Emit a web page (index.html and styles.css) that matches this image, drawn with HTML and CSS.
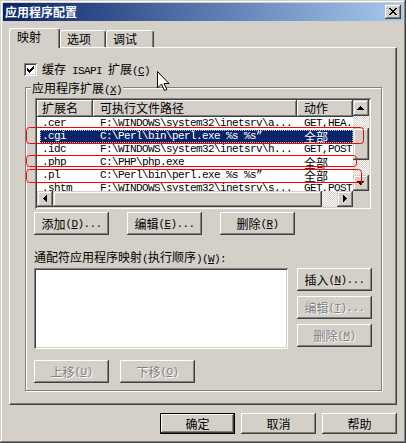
FILE: index.html
```html
<!DOCTYPE html>
<html>
<head>
<meta charset="utf-8">
<title>应用程序配置</title>
<link rel="stylesheet" href="styles.css">
</head>
<body>
<div class="win">
  <div class="titlebar">
    <span class="title">应用程序配置</span>
    <span class="close"><svg width="16" height="14" shape-rendering="crispEdges"><path d="M4 3h2v1H4zM10 3h2v1h-2zM5 4h2v1H5zM9 4h2v1H9zM6 5h4v1H6zM7 6h2v1H7zM6 7h4v1H6zM5 8h2v1H5zM9 8h2v1H9zM4 9h2v1H4zM10 9h2v1h-2z" fill="#000"/></svg></span>
  </div>

  <div class="tabs">
    <div class="tab sel t1">映射</div>
    <div class="tab t2">选项</div>
    <div class="tab t3">调试</div>
  </div>

  <div class="panel">
    <div class="chk-row">
      <span class="chk"><svg width="13" height="13" shape-rendering="crispEdges"><path d="M3 5h1v3H3zM4 6h1v3H4zM5 7h1v3H5zM6 6h1v3H6zM7 5h1v3H7zM8 4h1v3H8zM9 3h1v3H9z" fill="#000"/></svg></span>
      <span class="chk-label">缓存<span class="m"> ISAPI </span>扩展<span class="m">(<u>C</u>)</span></span>
    </div>

    <div class="group">
      <span class="glabel">应用程序扩展<span class="m">(<u>X</u>)</span></span>

      <div class="lv">
        <div class="lv-main">
          <div class="lv-head">
            <span class="hc h1">扩展名</span><span class="hc h2">可执行文件路径</span><span class="hc h3">动作</span>
          </div>
          <div class="row"><span class="c1 m">.cer</span><span class="c2 m">F:\WINDOWS\system32\inetsrv\a...</span><span class="c3 m">GET,HEA...</span></div>
          <div class="row sel"><span class="c1 m">.cgi</span><span class="c2 m">C:\Perl\bin\perl.exe %s %s”</span><span class="c3 zh">全部</span></div>
          <div class="row"><span class="c1 m">.idc</span><span class="c2 m">F:\WINDOWS\system32\inetsrv\h...</span><span class="c3 m">GET,POST</span></div>
          <div class="row"><span class="c1 m">.php</span><span class="c2 m">C:\PHP\php.exe</span><span class="c3 zh">全部</span></div>
          <div class="row"><span class="c1 m">.pl</span><span class="c2 m">C:\Perl\bin\perl.exe %s %s”</span><span class="c3 zh">全部</span></div>
          <div class="row"><span class="c1 m">.shtm</span><span class="c2 m">F:\WINDOWS\system32\inetsrv\s...</span><span class="c3 m">GET,POST</span></div>
        </div>
        <div class="vs">
          <span class="sb"><svg width="14" height="14" shape-rendering="crispEdges"><path transform="translate(3,5)" d="M3 0h1v1H3zM2 1h3v1H2zM1 2h5v1H1zM0 3h7v1H0z"/></svg></span>
          <span class="track vt1"></span>
          <span class="thumb vthumb"></span>
          <span class="track vt2"></span>
          <span class="sb"><svg width="14" height="14" shape-rendering="crispEdges"><path transform="translate(3,5)" d="M0 0h7v1H0zM1 1h5v1H1zM2 2h3v1H2zM3 3h1v1H3z"/></svg></span>
        </div>
        <div class="hs">
          <span class="sb"><svg width="14" height="14" shape-rendering="crispEdges"><path transform="translate(5,3)" d="M3 0h1v7H3zM2 1h1v5H2zM1 2h1v3H1zM0 3h1v1H0z"/></svg></span>
          <span class="thumb hthumb"></span>
          <span class="track ht"></span>
          <span class="sb"><svg width="14" height="14" shape-rendering="crispEdges"><path transform="translate(5,3)" d="M0 0h1v7H0zM1 1h1v5H1zM2 2h1v3H2zM3 3h1v1H3z"/></svg></span>
        </div>
        <div class="corner"></div>
      </div>

      <div class="btnrow">
        <span class="btn">添加<span class="m">(<u>D</u>)...</span></span>
        <span class="btn">编辑<span class="m">(<u>E</u>)...</span></span>
        <span class="btn">删除<span class="m">(<u>R</u>)</span></span>
      </div>

      <div class="wlabel">通配符应用程序映射<span class="m">(</span>执行顺序<span class="m">)(<u>W</u>):</span></div>

      <div class="wild">
        <div class="wbox"></div>
        <div class="vbtns">
          <span class="btn">插入<span class="m">(<u>N</u>)...</span></span>
          <span class="btn dis">编辑<span class="m">(<u>T</u>)...</span></span>
          <span class="btn dis">删除<span class="m">(<u>M</u>)</span></span>
        </div>
      </div>

      <div class="mvrow">
        <span class="btn dis">上移<span class="m">(<u>U</u>)</span></span>
        <span class="btn dis">下移<span class="m">(<u>O</u>)</span></span>
      </div>
    </div>
  </div>

  <div class="footer">
    <span class="btn fbtn def">确定</span>
    <span class="btn fbtn">取消</span>
    <span class="btn fbtn">帮助</span>
  </div>

  <svg class="marks" width="406" height="443">
    <g fill="none" stroke="#ff0000" stroke-width="1">
      <rect x="26.5" y="127.5" width="337" height="16" rx="3"/>
      <rect x="26.5" y="155.5" width="330" height="11" rx="3"/>
      <rect x="26.5" y="169.5" width="335" height="13" rx="3"/>
      <path d="M361.5 176 V185"/>
    </g>
  </svg>

  <svg class="cursor" width="13" height="21"><path d="M0.5 0.5 V17 L4.5 13 L7.5 19.5 L10 18.5 L7 12.5 H12 Z" fill="#fff" stroke="#000" stroke-width="1" stroke-linejoin="miter"/></svg>
</div>
</body>
</html>
```
FILE: styles.css
```css
* { box-sizing: border-box; }
html, body { margin: 0; padding: 0; }
body {
  width: 406px;
  height: 443px;
  overflow: hidden;
  background: #d4d0c8;
  color: #000;
  font: 12px/14px "Noto Sans CJK SC", sans-serif;
}
.m {
  font-family: "Liberation Mono", monospace;
  font-size: 11px;
  letter-spacing: -0.6px;
}

.win {
  position: relative;
  width: 406px;
  height: 443px;
  padding: 3px;
  background: #d4d0c8;
  box-shadow: inset -1px -1px #404040, inset 1px 1px #d4d0c8, inset -2px -2px #808080, inset 2px 2px #fff;
}

/* title bar */
.titlebar {
  display: flex;
  align-items: center;
  height: 18px;
  padding: 0 2px;
  background: linear-gradient(90deg, #0a246a, #a6caf0);
}
.title {
  color: #fff;
  font-weight: bold;
  line-height: 18px;
}
.close {
  margin-left: auto;
  width: 16px;
  height: 14px;
  background: #d4d0c8;
  box-shadow: inset -1px -1px #404040, inset 1px 1px #fff, inset -2px -2px #808080;
}
.close svg { display: block; }

/* tabs */
.tabs {
  display: flex;
  align-items: flex-end;
  height: 19px;
  margin-top: 7px;
  padding-left: 6px;
}
.tab {
  height: 17px;
  border: 1px solid;
  border-bottom: 0;
  border-color: #fff #404040 #fff #fff;
  border-radius: 3px 3px 0 0;
  box-shadow: inset -1px 0 #808080;
  padding-left: 6px;
  line-height: 16px;
  background: #d4d0c8;
}
.tab.sel {
  position: relative;
  z-index: 1;
  height: 20px;
  margin-bottom: -1px;
  padding-left: 7px;
  line-height: 15px;
}
.t1 { width: 51px; }
.t2 { width: 46px; }
.t3 { width: 48px; }

.panel {
  height: 358px;
  margin: 0 6px;
  border: 1px solid;
  border-color: #fff #404040 #404040 #fff;
  box-shadow: inset -1px -1px #808080;
}

.chk-row {
  display: flex;
  align-items: center;
  height: 13px;
  margin: 15px 0 0 14px;
}
.chk {
  width: 13px;
  height: 13px;
  background: #fff;
  box-shadow: inset 1px 1px #808080, inset -1px -1px #fff, inset 2px 2px #404040, inset -2px -2px #d4d0c8;
}
.chk svg { display: block; }
.chk-label { margin-left: 5px; line-height: 13px; }

/* group box */
.group {
  display: flex;
  flex-direction: column;
  align-items: flex-start;
  width: 357px;
  height: 304px;
  margin: 11px 0 0 15px;
  border: 1px solid #808080;
  box-shadow: inset 1px 1px #fff, 1px 1px #fff;
}
.glabel {
  height: 14px;
  margin: -7px 0 0 5px;
  padding: 0 1px;
  line-height: 14px;
  background: #d4d0c8;
}

/* list view */
.lv {
  display: grid;
  grid-template-columns: 316px 16px;
  grid-template-rows: 91px 16px;
  width: 336px;
  height: 111px;
  margin: 3px 0 0 9px;
  padding: 2px;
  background: #fff;
  box-shadow: inset 1px 1px #808080, inset -1px -1px #fff, inset 2px 2px #404040, inset -2px -2px #d4d0c8;
}
.lv-main {
  overflow: hidden;
  background: #fff;
}
.lv-head {
  display: flex;
  height: 17px;
  background: #d4d0c8;
}
.hc {
  height: 17px;
  line-height: 16px;
  white-space: nowrap;
  box-shadow: inset -1px -1px #404040, inset 1px 1px #fff, inset -2px -2px #808080;
}
.h1 { width: 56px; padding-left: 5px; }
.h2 { width: 204px; padding-left: 7px; }
.h3 { width: 56px; padding-left: 7px; }

.row {
  display: flex;
  height: 13px;
  margin-left: 3px;
  line-height: 13px;
  white-space: nowrap;
}
.row.sel {
  background: #0a246a;
  color: #fff;
  outline: 1px dotted #c8c4bc;
  outline-offset: -1px;
}
.c1 { width: 53px; padding-left: 2px; flex: none; }
.c2 { width: 204px; padding-left: 7px; flex: none; overflow: hidden; }
.c3 { width: 56px; padding-left: 7px; flex: none; }
.c3.zh { line-height: 13px; }

/* scrollbars */
.vs {
  display: flex;
  flex-direction: column;
}
.hs {
  display: flex;
}
.sb {
  display: flex;
  align-items: center;
  justify-content: center;
  width: 16px;
  height: 16px;
  flex: none;
  background: #d4d0c8;
  box-shadow: inset -1px -1px #404040, inset 1px 1px #d4d0c8, inset -2px -2px #808080, inset 2px 2px #fff;
}
.sb svg { display: block; fill: #000; }
.thumb {
  flex: none;
  background: #d4d0c8;
  box-shadow: inset -1px -1px #404040, inset 1px 1px #d4d0c8, inset -2px -2px #808080, inset 2px 2px #fff;
}
.track {
  background: repeating-conic-gradient(#fff 0 25%, #d4d0c8 0 50%) 0 0 / 2px 2px;
}
.vt1 { height: 12px; flex: none; }
.vthumb { height: 32px; }
.vt2 { flex: 1; }
.hthumb { width: 269px; }
.ht { flex: 1; }
.corner { background: #d4d0c8; }

/* buttons */
.btn {
  display: flex;
  align-items: center;
  justify-content: center;
  width: 75px;
  height: 23px;
  flex: none;
  background: #d4d0c8;
  white-space: nowrap;
  box-shadow: inset -1px -1px #404040, inset 1px 1px #fff, inset -2px -2px #808080;
}
.btn.dis {
  color: #808080;
  text-shadow: 1px 1px #fff;
}
.btn.def {
  box-shadow: inset 0 0 0 1px #000, inset -2px -2px #404040, inset 2px 2px #fff, inset -3px -3px #808080;
}
.fbtn { height: 21px; }

.btnrow {
  display: flex;
  gap: 18px;
  margin: 3px 0 0 8px;
}
.wlabel {
  height: 14px;
  margin: 15px 0 0 8px;
  line-height: 14px;
  white-space: nowrap;
}
.wild {
  display: flex;
  margin: 4px 0 0 8px;
}
.wbox {
  width: 254px;
  height: 81px;
  background: #fff;
  box-shadow: inset 1px 1px #808080, inset -1px -1px #fff, inset 2px 2px #404040, inset -2px -2px #d4d0c8;
}
.vbtns {
  display: flex;
  flex-direction: column;
  gap: 5px;
  margin-left: 9px;
}
.mvrow {
  display: flex;
  gap: 11px;
  margin: 11px 0 0 8px;
}

.footer {
  display: flex;
  justify-content: flex-end;
  gap: 6px;
  margin-top: 8px;
  padding-right: 6px;
}

/* overlays */
.marks {
  position: absolute;
  left: 0;
  top: 0;
  pointer-events: none;
  z-index: 5;
}
.cursor {
  position: absolute;
  left: 157px;
  top: 71px;
  z-index: 6;
}
```
